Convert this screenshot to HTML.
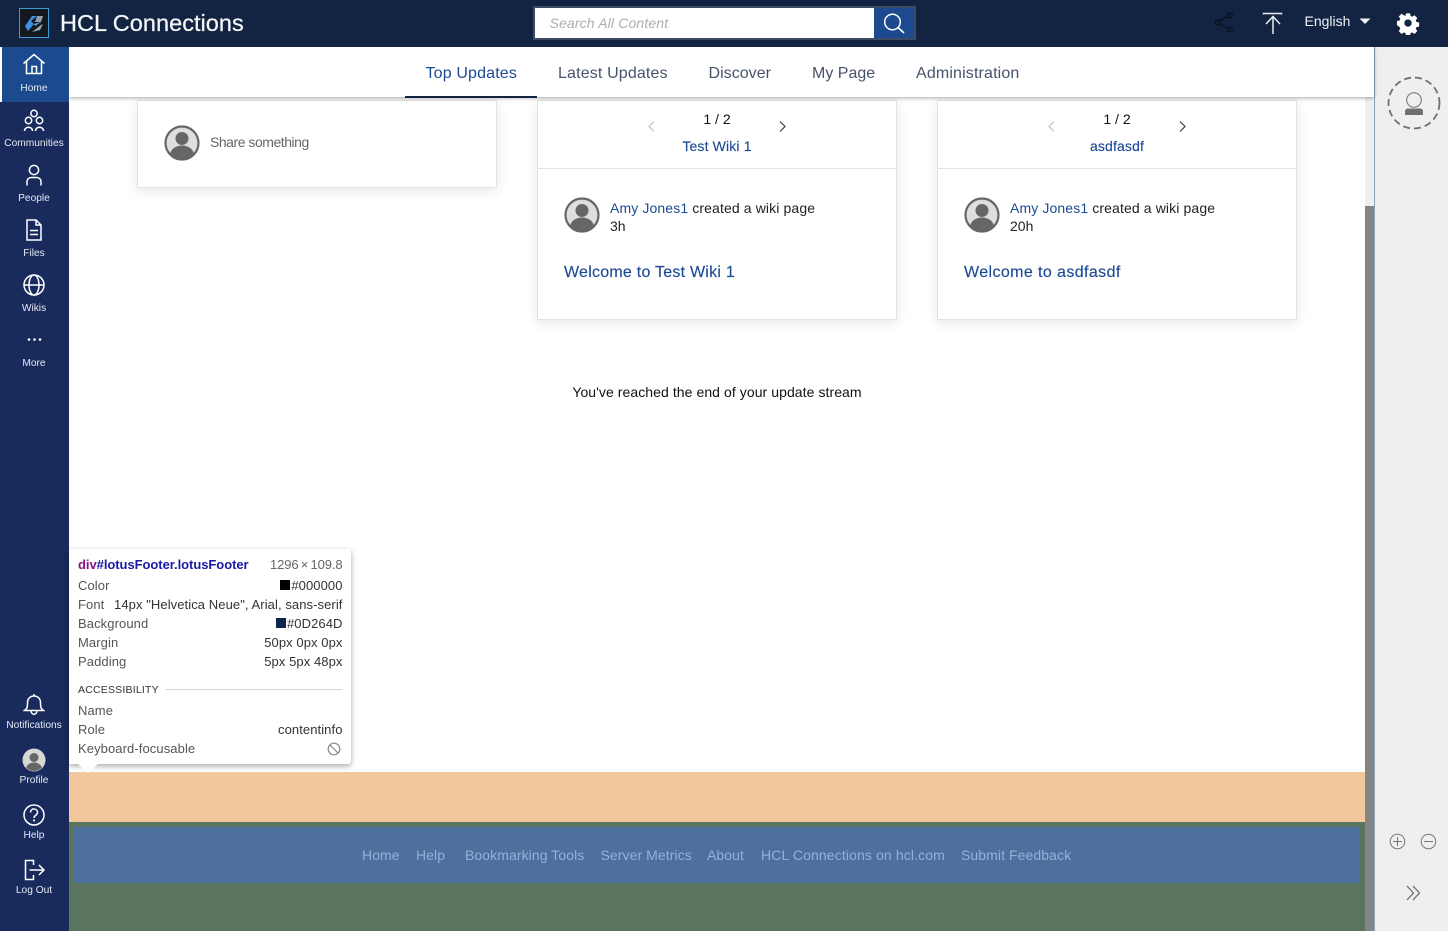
<!DOCTYPE html>
<html lang="en"><head><meta charset="utf-8"><title>HCL Connections</title>
<style>
html,body{margin:0;padding:0;width:1448px;height:931px;overflow:hidden;background:#fff;font-family:"Liberation Sans",Arial,sans-serif;}
div,span,a,svg{position:absolute;display:block}
.t{white-space:nowrap}
.nl{left:0;width:68px;text-align:center;font-size:10.2px;color:#e4e8f0;white-space:nowrap;line-height:12px}
.tab{top:64px;font-size:16px;line-height:19px;color:#46536a;white-space:nowrap;letter-spacing:.15px}
.card{background:#fff;border:1px solid #e3e3e3;box-sizing:border-box;box-shadow:0 3px 12px rgba(0,0,0,.10)}
.bl{color:#1d4a94}
.tt{font-size:13px;line-height:15px;white-space:nowrap;color:#555;letter-spacing:.09px}
.tr{font-size:13px;line-height:15px;white-space:nowrap;right:1105.5px;color:#333;letter-spacing:.08px}
.f{top:847px;font-size:14px;line-height:16px;color:#96b0d8;white-space:nowrap;letter-spacing:.08px}
.b14{font-size:14px;line-height:16px;letter-spacing:.12px}
svg.i{fill:none;stroke:#fff;stroke-width:1.5}
</style></head><body>
<!-- main content -->
<div style="left:1365px;top:97px;width:9px;height:109px;background:#efefef"></div>
<div style="left:1365px;top:206px;width:9px;height:725px;background:#858585"></div>
<div style="left:1374px;top:47px;width:1px;height:884px;background:#8ca0b8"></div>
<div style="left:1375px;top:47px;width:73px;height:884px;background:#efefef"></div>

<!-- share card -->
<div class="card" style="left:137px;top:100px;width:360px;height:88px"></div>
<svg style="left:164px;top:125px" width="36" height="36" viewBox="0 0 36 36"><defs><clipPath id="c1"><circle cx="18" cy="18" r="16.5"/></clipPath></defs><circle cx="18" cy="18" r="16.5" fill="#dedede"/><g clip-path="url(#c1)" fill="#666"><circle cx="18" cy="13.5" r="6.5"/><ellipse cx="18" cy="30" rx="12" ry="9.5"/></g><circle cx="18" cy="18" r="16.5" fill="none" stroke="#666" stroke-width="2.2"/></svg>
<div class="t" style="left:210px;top:134px;font-size:14px;line-height:17px;color:#666;letter-spacing:-.47px">Share something</div>

<!-- card 1 -->
<div class="card" style="left:537px;top:100px;width:360px;height:220px"></div>
<div style="left:538px;top:168px;width:358px;height:1px;background:#e3e3e3"></div>
<div class="t" style="left:537px;width:360px;text-align:center;top:111px;font-size:14px;line-height:16px;color:#111">1 / 2</div>
<svg style="left:647px;top:120px" width="9" height="13" viewBox="0 0 9 13"><path d="M7 1.500 2 6.500l5 5" fill="none" stroke="#bbb" stroke-width="1"/></svg>
<svg style="left:778px;top:120px" width="9" height="13" viewBox="0 0 9 13"><path d="M2 1.500 7 6.500l-5 5" fill="none" stroke="#333" stroke-width="1.100"/></svg>
<div class="t bl" style="left:537px;width:360px;text-align:center;top:138px;font-size:14px;line-height:16px;letter-spacing:.15px;-webkit-text-stroke:.15px #1d4a94">Test Wiki 1</div>
<svg style="left:564px;top:197px" width="36" height="36" viewBox="0 0 36 36"><defs><clipPath id="c2"><circle cx="18" cy="18" r="16.5"/></clipPath></defs><circle cx="18" cy="18" r="16.5" fill="#dedede"/><g clip-path="url(#c2)" fill="#666"><circle cx="18" cy="13.500" r="6.500"/><ellipse cx="18" cy="30" rx="12" ry="9.500"/></g><circle cx="18" cy="18" r="16.500" fill="none" stroke="#666" stroke-width="2.200"/></svg>
<div class="t b14" style="left:610px;top:200px;color:#222"><span class="bl" style="position:static;display:inline">Amy Jones1</span> created a wiki page</div>
<div class="t" style="left:610px;top:218px;font-size:14px;line-height:16px;color:#222">3h</div>
<div class="t bl" style="left:564px;top:263px;font-size:16px;line-height:19px;letter-spacing:.24px;-webkit-text-stroke:.15px #1d4a94">Welcome to Test Wiki 1</div>

<!-- card 2 -->
<div class="card" style="left:937px;top:100px;width:360px;height:220px"></div>
<div style="left:938px;top:168px;width:358px;height:1px;background:#e3e3e3"></div>
<div class="t" style="left:937px;width:360px;text-align:center;top:111px;font-size:14px;line-height:16px;color:#111">1 / 2</div>
<svg style="left:1047px;top:120px" width="9" height="13" viewBox="0 0 9 13"><path d="M7 1.500 2 6.500l5 5" fill="none" stroke="#bbb" stroke-width="1"/></svg>
<svg style="left:1178px;top:120px" width="9" height="13" viewBox="0 0 9 13"><path d="M2 1.500 7 6.500l-5 5" fill="none" stroke="#333" stroke-width="1.100"/></svg>
<div class="t bl" style="left:937px;width:360px;text-align:center;top:138px;font-size:14px;line-height:16px;letter-spacing:.15px;-webkit-text-stroke:.15px #1d4a94">asdfasdf</div>
<svg style="left:964px;top:197px" width="36" height="36" viewBox="0 0 36 36"><defs><clipPath id="c3"><circle cx="18" cy="18" r="16.500"/></clipPath></defs><circle cx="18" cy="18" r="16.500" fill="#dedede"/><g clip-path="url(#c3)" fill="#666"><circle cx="18" cy="13.500" r="6.500"/><ellipse cx="18" cy="30" rx="12" ry="9.500"/></g><circle cx="18" cy="18" r="16.500" fill="none" stroke="#666" stroke-width="2.200"/></svg>
<div class="t b14" style="left:1010px;top:200px;color:#222"><span class="bl" style="position:static;display:inline">Amy Jones1</span> created a wiki page</div>
<div class="t" style="left:1010px;top:218px;font-size:14px;line-height:16px;color:#222">20h</div>
<div class="t bl" style="left:964px;top:263px;font-size:16px;line-height:19px;letter-spacing:.4px;-webkit-text-stroke:.15px #1d4a94">Welcome to asdfasdf</div>

<div class="t" style="left:537px;width:360px;text-align:center;top:384px;font-size:14px;line-height:16px;color:#111;letter-spacing:.07px">You've reached the end of your update stream</div>

<!-- footer highlight -->
<div style="left:69px;top:772px;width:1296px;height:50px;background:#f0c89c"></div>
<div style="left:69px;top:822px;width:1296px;height:109px;background:#5a755e"></div>
<div style="left:74px;top:827px;width:1286px;height:56px;background:#4e709f"></div>
<div class="f" style="left:362px">Home</div>
<div class="f" style="left:416px">Help</div>
<div class="f" style="left:465px">Bookmarking Tools</div>
<div class="f" style="left:600.500px">Server Metrics</div>
<div class="f" style="left:707px">About</div>
<div class="f" style="left:761px;letter-spacing:.12px">HCL Connections on hcl.com</div>
<div class="f" style="left:961px">Submit Feedback</div>

<!-- tabs bar -->
<div style="left:69px;top:47px;width:1305px;height:50px;background:#fff;box-shadow:0 1px 4px rgba(0,0,0,.35)"></div>
<div class="tab" style="left:425.500px;color:#1d4a94">Top Updates</div>
<div style="left:405px;top:96px;width:132px;height:2px;background:#132342"></div>
<div class="tab" style="left:558px">Latest Updates</div>
<div class="tab" style="left:708.500px;letter-spacing:.03px">Discover</div>
<div class="tab" style="left:812px;letter-spacing:0">My Page</div>
<div class="tab" style="left:916px">Administration</div>

<!-- header -->
<div style="left:0;top:0;width:1448px;height:47px;background:#132342"></div>
<div style="left:19px;top:8px;width:28px;height:28px;background:#14181f;border:1px solid #3d9ad6"></div>
<svg style="left:24px;top:13px" width="22" height="22" viewBox="0 0 22 22"><path d="M1 13 8 3h5L7 8l3 3-6 7z" fill="#3f8fe0"/><path d="M13 3h6l-2 6-6 0z" fill="#8fa0ad"/><path d="M8 19l9-7 2-1-3 6z" fill="#9aa7b0"/><path d="M10 11l7-2-6 4z" fill="#5fb0ec"/></svg>
<div class="t" style="left:60px;top:9px;font-size:23.500px;line-height:29px;color:#f4f6f8;letter-spacing:.03px;-webkit-text-stroke:.25px #f4f6f8">HCL Connections</div>

<div style="left:533px;top:6px;width:383px;height:34px;background:#3d4b63"></div>
<div style="left:535px;top:8px;width:339px;height:30px;background:#fff"></div>
<div style="left:874px;top:8px;width:40px;height:30px;background:#1d4a8f"></div>
<div class="t" style="left:549.500px;top:15px;font-size:14px;line-height:16px;font-style:italic;color:#a9adb3;letter-spacing:.14px">Search All Content</div>
<svg style="left:882px;top:12px" width="24" height="23" viewBox="0 0 24 23"><circle cx="10.500" cy="10" r="7.800" fill="none" stroke="#fff" stroke-width="1.500"/><path d="M16 15.500l6 5.500" stroke="#fff" stroke-width="1.600" fill="none"/></svg>

<svg style="left:1213px;top:11px" width="22" height="24" viewBox="0 0 22 24"><g fill="none" stroke="#0a1220" stroke-width="1.500"><circle cx="17" cy="4.500" r="2.300"/><circle cx="17" cy="18.500" r="2.300"/><circle cx="4.500" cy="11.500" r="2.300"/><path d="M6.500 10.300 15 5.500M6.500 12.700l8.500 4.800"/></g></svg>
<svg style="left:1262px;top:11px" width="22" height="24" viewBox="0 0 22 24"><g fill="none" stroke="#e8ebf0" stroke-width="1.500"><path d="M1.500 3.500V2.500h18v1"/><path d="M11 23V6M4 13l7-7.500 7 7.500"/></g></svg>
<div class="t" style="left:1304.500px;top:13px;font-size:14px;line-height:16px;color:#f0f2f5">English</div>
<svg style="left:1359px;top:18px" width="12" height="7" viewBox="0 0 12 7"><path d="M.5.500h11L6 6z" fill="#eef0f3"/></svg>
<svg style="left:1396px;top:11px" width="24" height="24" viewBox="0 0 24 24"><path fill="#fff" fill-rule="evenodd" d="M9.600.8h4.800l.6 3.100 1.800.8 2.700-1.800 3.300 3.400-1.800 2.600.8 1.900 3.100.6v4.800l-3.100.6-.8 1.900 1.800 2.600-3.300 3.400-2.700-1.800-1.800.8-.6 3.100H9.600l-.6-3.100-1.800-.8-2.700 1.800-3.300-3.400 1.800-2.600-.8-1.900L-.9 14.400V9.600L2.200 9l.8-1.900L1.200 4.500l3.300-3.400 2.700 1.800L9 3.900zM12 7.700a4.300 4.300 0 1 0 0 8.600 4.300 4.300 0 0 0 0-8.600z" transform="translate(1.700 1.700) scale(.86)"/></svg>

<!-- sidebar -->
<div style="left:0;top:47px;width:69px;height:884px;background:#182b5c"></div>
<div style="left:2px;top:47px;width:67px;height:55px;background:#1c4a8f"></div>
<div style="left:0;top:47px;width:2px;height:55px;background:#fff"></div>

<svg class="i" style="left:22px;top:53px" width="24" height="22" viewBox="0 0 24 22"><path d="M1.500 10.500 12 1.500l10.500 9M4.500 8.500V20.500h15V8.500M10 20.500v-7h4.500v7"/></svg>
<div class="nl" style="top:83px">Home</div>
<svg class="i" style="left:23px;top:109px" width="22" height="23" viewBox="0 0 22 23"><circle cx="11" cy="4.500" r="3.200"/><circle cx="5.500" cy="11.500" r="3.200"/><circle cx="16.500" cy="11.500" r="3.200"/><path d="M1.500 22c0-5 8-5 8 0M12.500 22c0-5 8-5 8 0"/></svg>
<div class="nl" style="top:138px">Communities</div>
<svg class="i" style="left:25px;top:164px" width="18" height="22" viewBox="0 0 18 22"><circle cx="9" cy="6" r="4.600"/><path d="M2 21.500v-3.500c0-3 2-4.500 4.500-4.500h5c2.500 0 4.500 1.500 4.500 4.500v3.500"/></svg>
<div class="nl" style="top:193px">People</div>
<svg class="i" style="left:26px;top:219px" width="16" height="22" viewBox="0 0 16 22"><path d="M1 1h9l5 5v15H1zM10 1v5h5M4 11.500h8M4 15.500h8"/></svg>
<div class="nl" style="top:248px">Files</div>
<svg class="i" style="left:23px;top:274px" width="22" height="22" viewBox="0 0 22 22"><circle cx="11" cy="11" r="10"/><ellipse cx="11" cy="11" rx="5" ry="10"/><path d="M1 11h20"/></svg>
<div class="nl" style="top:303px">Wikis</div>
<svg style="left:26.500px;top:337px" width="15" height="5" viewBox="0 0 15 5"><g fill="#fff"><circle cx="2" cy="2.500" r="1.300"/><circle cx="7.500" cy="2.500" r="1.300"/><circle cx="13" cy="2.500" r="1.300"/></g></svg>
<div class="nl" style="top:358px">More</div>

<svg class="i" style="left:23px;top:693px" width="22" height="23" viewBox="0 0 22 23"><path d="M1.500 17.500c3-2 3-4 3-8 0-4 3-6.500 6.500-6.500s6.500 2.500 6.500 6.500c0 4 0 6 3 8zM11 1v2M8 17.500c0 5 6 5 6 0"/></svg>
<div class="nl" style="top:720px">Notifications</div>
<svg style="left:22px;top:748px" width="24" height="24" viewBox="0 0 24 24"><defs><clipPath id="c4"><circle cx="12" cy="12" r="11"/></clipPath></defs><circle cx="12" cy="12" r="11.500" fill="#d6d6d6"/><g clip-path="url(#c4)" fill="#666"><circle cx="12" cy="9.500" r="4.500"/><ellipse cx="12" cy="21" rx="8" ry="6.500"/></g></svg>
<div class="nl" style="top:775px">Profile</div>
<svg class="i" style="left:23px;top:804px" width="22" height="22" viewBox="0 0 22 22"><circle cx="11" cy="11" r="10"/><path d="M7.500 8.500c0-5 7-4.500 7 0 0 3-3.500 2.500-3.500 5.500"/><path d="M11 15.500v1.800" stroke-width="1.800"/></svg>
<div class="nl" style="top:830px">Help</div>
<svg class="i" style="left:24px;top:859px" width="21" height="22" viewBox="0 0 21 22"><path d="M9.500 6V1.500h-8v19h8V16M5.500 11h14.500M15 6l5 5-5 5"/></svg>
<div class="nl" style="top:885px">Log Out</div>

<!-- right panel -->
<svg style="left:1387px;top:76px" width="54" height="54" viewBox="0 0 54 54"><circle cx="27" cy="27" r="25.500" fill="none" stroke="#707070" stroke-width="1.800" stroke-dasharray="7 4"/><circle cx="27" cy="24" r="7.300" fill="none" stroke="#707070" stroke-width="1"/><path d="M18 39v-3.500c0-2 1.500-3 3-3h12c1.500 0 3 1 3 3V39z" fill="#707070"/></svg>
<svg style="left:1389px;top:833px" width="17" height="17" viewBox="0 0 17 17"><g fill="none" stroke="#777" stroke-width="1"><circle cx="8.500" cy="8.500" r="7.300"/><path d="M4 8.500h9M8.500 4v9"/></g></svg>
<svg style="left:1420px;top:833px" width="17" height="17" viewBox="0 0 17 17"><g fill="none" stroke="#777" stroke-width="1"><circle cx="8.500" cy="8.500" r="7.300"/><path d="M4 8.500h9"/></g></svg>
<svg style="left:1404.500px;top:884px" width="18" height="18" viewBox="0 0 18 18"><path d="M2 2l6.500 7L2 16M8 2l6.500 7L8 16" fill="none" stroke="#777" stroke-width="1.300"/></svg>

<!-- inspector tooltip -->
<div style="left:69px;top:549px;width:282px;height:215px;background:#fff;border-radius:0 3px 3px 0;box-shadow:0 2px 6px rgba(0,0,0,.35)"></div>
<svg style="left:78px;top:764px" width="20" height="9" viewBox="0 0 20 9"><path d="M0 0h20l-10 9z" fill="#fff"/></svg>
<div class="t" style="left:78px;top:557px;font-size:13px;line-height:15px;font-weight:bold;letter-spacing:-.05px;color:#1a1aa6"><span style="position:static;display:inline;color:#881280">div</span>#lotusFooter.lotusFooter</div>
<div class="tr" style="top:557px;letter-spacing:-.1px;color:#666;word-spacing:-1.300px">1296 × 109.8</div>
<div class="tt" style="left:78px;top:578px">Color</div>
<div style="left:280px;top:580px;width:10px;height:10px;background:#000"></div>
<div class="tr" style="top:578px">#000000</div>
<div class="tt" style="left:78px;top:597px">Font</div>
<div class="tr" style="top:597px">14px "Helvetica Neue", Arial, sans-serif</div>
<div class="tt" style="left:78px;top:616px">Background</div>
<div style="left:276px;top:618px;width:10px;height:10px;background:#0d264d"></div>
<div class="tr" style="top:616px">#0D264D</div>
<div class="tt" style="left:78px;top:635px">Margin</div>
<div class="tr" style="top:635px">50px 0px 0px</div>
<div class="tt" style="left:78px;top:654px">Padding</div>
<div class="tr" style="top:654px">5px 5px 48px</div>
<div class="t" style="left:78px;top:684px;font-size:10.500px;line-height:13px;color:#333;letter-spacing:.2px">ACCESSIBILITY</div>
<div style="left:165px;top:689px;width:177px;height:1px;background:#d8d8d8"></div>
<div class="tt" style="left:78px;top:703px">Name</div>
<div class="tt" style="left:78px;top:722px">Role</div>
<div class="tr" style="top:722px">contentinfo</div>
<div class="tt" style="left:78px;top:741px">Keyboard-focusable</div>
<svg style="left:327px;top:742px" width="14" height="14" viewBox="0 0 14 14"><g fill="none" stroke="#888" stroke-width="1.200"><circle cx="7" cy="7" r="5.800"/><path d="M3 3l8 8"/></g></svg>
</body></html>
